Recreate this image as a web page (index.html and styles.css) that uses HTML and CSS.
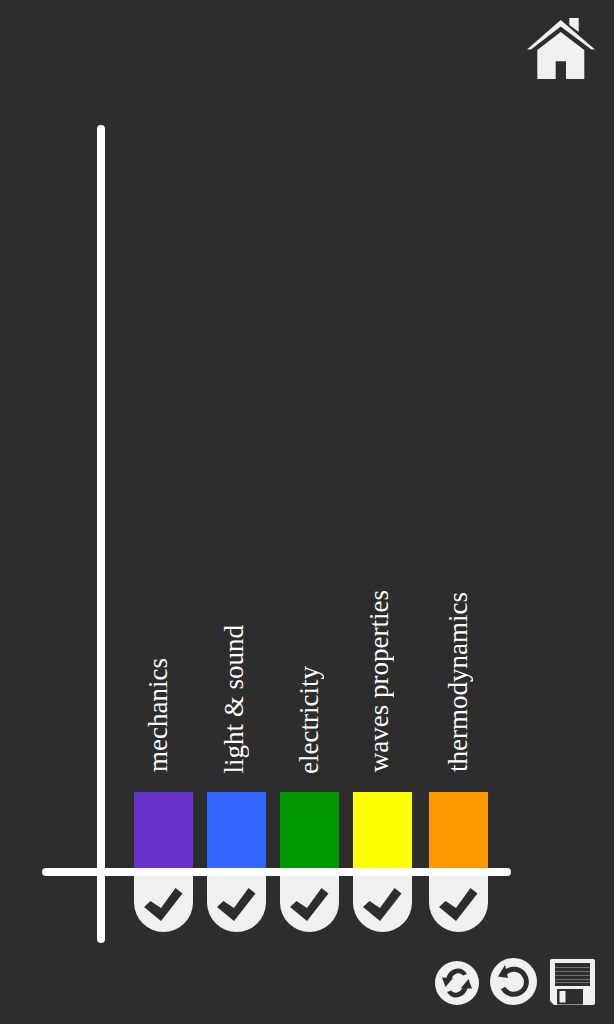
FILE: index.html
```html
<!DOCTYPE html>
<html lang="en">
<head>
  <meta charset="UTF-8">
  <title>Topics</title>
  <link rel="stylesheet" href="styles.css">
</head>
<body>
  <header>
    <svg class="home-icon" width="70" height="64" viewBox="0 0 70 64">
      <path fill="#f0f0f0" d="M43.3 2h9.4v14l-9.4-7z"/>
      <path fill="#f0f0f0" d="M1 33.5 34.7 4 69 33.5h-3.6L34.7 10.5 5 33.5z"/>
      <path fill="#f0f0f0" d="M11.3 34 34.7 16 58.3 34v29H40V45.3H29.7V63H11.3z"/>
    </svg>
  </header>
  <main>
    <div class="chart">
      <div class="axis-y"></div>
      <div class="axis-x"></div>
      <div class="col">
        <div class="label shift-mechanics">mechanics</div>
        <div class="bar purple"></div>
        <div class="toggle"><svg width="40" height="36" viewBox="0 0 40 36"><path d="M0 19 6.500 13l10.500 7L31.500 0l7 5.500L17 33z" fill="#2d2d2d"/></svg></div>
      </div>
      <div class="col">
        <div class="label shift-light">light &amp; sound</div>
        <div class="bar blue"></div>
        <div class="toggle"><svg width="40" height="36" viewBox="0 0 40 36"><path d="M0 19 6.500 13l10.500 7L31.500 0l7 5.500L17 33z" fill="#2d2d2d"/></svg></div>
      </div>
      <div class="col">
        <div class="label shift-electricity">electricity</div>
        <div class="bar green"></div>
        <div class="toggle"><svg width="40" height="36" viewBox="0 0 40 36"><path d="M0 19 6.500 13l10.500 7L31.500 0l7 5.500L17 33z" fill="#2d2d2d"/></svg></div>
      </div>
      <div class="col">
        <div class="label shift-waves">waves properties</div>
        <div class="bar yellow"></div>
        <div class="toggle"><svg width="40" height="36" viewBox="0 0 40 36"><path d="M0 19 6.500 13l10.500 7L31.500 0l7 5.500L17 33z" fill="#2d2d2d"/></svg></div>
      </div>
      <div class="col last">
        <div class="label shift-thermo">thermodynamics</div>
        <div class="bar orange"></div>
        <div class="toggle"><svg width="40" height="36" viewBox="0 0 40 36"><path d="M0 19 6.500 13l10.500 7L31.500 0l7 5.500L17 33z" fill="#2d2d2d"/></svg></div>
      </div>
    </div>
  </main>
  <footer>
    <svg class="btn-refresh" width="44" height="44" viewBox="0 0 44 44">
      <circle cx="22" cy="22" r="22" fill="#f0f0f0"/>
      <path fill="#2d2d2d" d="M7 16.500 18 17l-7.500 9zM11.500 17C13 11 18 7.500 23 7.500c4 0 7 2 9 5.500l-4 1.500c-2-2-4-2.500-6-2-2.500.5-4.500 2.500-5 4.500z"/>
      <path fill="#2d2d2d" transform="rotate(180 22 22)" d="M7 16.500 18 17l-7.500 9zM11.500 17C13 11 18 7.500 23 7.500c4 0 7 2 9 5.500l-4 1.500c-2-2-4-2.500-6-2-2.500.5-4.500 2.500-5 4.500z"/>
    </svg>
    <svg class="btn-undo" width="47" height="47" viewBox="0 0 47 47">
      <circle cx="23.500" cy="23.500" r="23.500" fill="#f0f0f0"/>
      <path fill="none" stroke="#2d2d2d" stroke-width="5" d="M15.500 14.500A12.500 12.500 0 1 1 13 30"/>
      <path fill="#2d2d2d" d="M8 18.500 15 7l3 13z"/>
    </svg>
    <svg class="btn-save" width="45" height="46" viewBox="0 0 45 46">
      <path fill="#f0f0f0" d="M2 0h41a2 2 0 0 1 2 2v42a2 2 0 0 1-2 2H4l-4-4V2a2 2 0 0 1 2-2z"/>
      <rect x="5" y="4" width="35" height="23" fill="#2d2d2d"/>
      <path stroke="#6f6f6f" stroke-width="1" d="M5 8.500h35M5 12.500h35M5 16.500h35M5 20.500h35M5 23.500h35"/>
      <rect x="7" y="30" width="26" height="15.500" fill="#2d2d2d"/>
      <rect x="9.500" y="32" width="6" height="11.500" fill="#f0f0f0"/>
    </svg>
  </footer>
</body>
</html>
```

FILE: styles.css
```css
body {
  background: #2d2d2d;
  margin: 0;
  height: 1024px;
  overflow: hidden;
  display: flex;
  flex-direction: column;
  font-family: "Liberation Serif", serif;
  color: white;
}
header {
  display: flex;
  justify-content: flex-end;
  padding: 16px 18px 0 0;
  height: 64px;
}
svg {
  display: block;
}
main {
  height: 863px;
  padding: 45px 0 0 42px;
  box-sizing: border-box;
}
.chart {
  position: relative;
  width: 469px;
  height: 818px;
  display: flex;
  align-items: flex-end;
  gap: 14px;
  padding-left: 92px;
  padding-bottom: 11px;
  box-sizing: border-box;
}
.axis-y {
  position: absolute;
  left: 55px;
  top: 0;
  width: 8px;
  height: 818px;
  background: white;
  border-radius: 4px;
}
.axis-x {
  position: absolute;
  left: 0;
  top: 743px;
  width: 469px;
  height: 8px;
  background: white;
  border-radius: 4px;
}
.col {
  width: 59px;
  display: flex;
  flex-direction: column;
}
.col.last {
  margin-left: 3px;
}
.label {
  writing-mode: vertical-rl;
  transform: rotate(180deg);
  font-size: 27px;
  line-height: 28px;
  margin-bottom: 20px;
  white-space: nowrap;
}
.shift-mechanics { margin-left: 10px; }
.shift-light { margin-left: 13px; margin-bottom: 18px; }
.shift-electricity { margin-left: 15px; margin-bottom: 18px; }
.shift-waves { margin-left: 12px; }
.shift-thermo { margin-left: 15px; }
.bar {
  width: 100%;
  height: 76px;
}
.purple { background: #6633cc; }
.blue { background: #3366ff; }
.green { background: #009900; }
.yellow { background: #ffff00; }
.orange { background: #ff9900; }
.toggle {
  width: 100%;
  height: 64px;
  background: #f0f0f0;
  border-radius: 0 0 29.5px 29.5px;
  display: flex;
  justify-content: center;
  padding-top: 20px;
  box-sizing: border-box;
}
footer {
  display: flex;
  justify-content: flex-end;
  align-items: flex-start;
  padding: 15px 19px 0 0;
}
.btn-refresh {
  margin-top: 3px;
  margin-right: 11px;
}
.btn-save {
  margin-top: 1px;
  margin-left: 13px;
}
```
